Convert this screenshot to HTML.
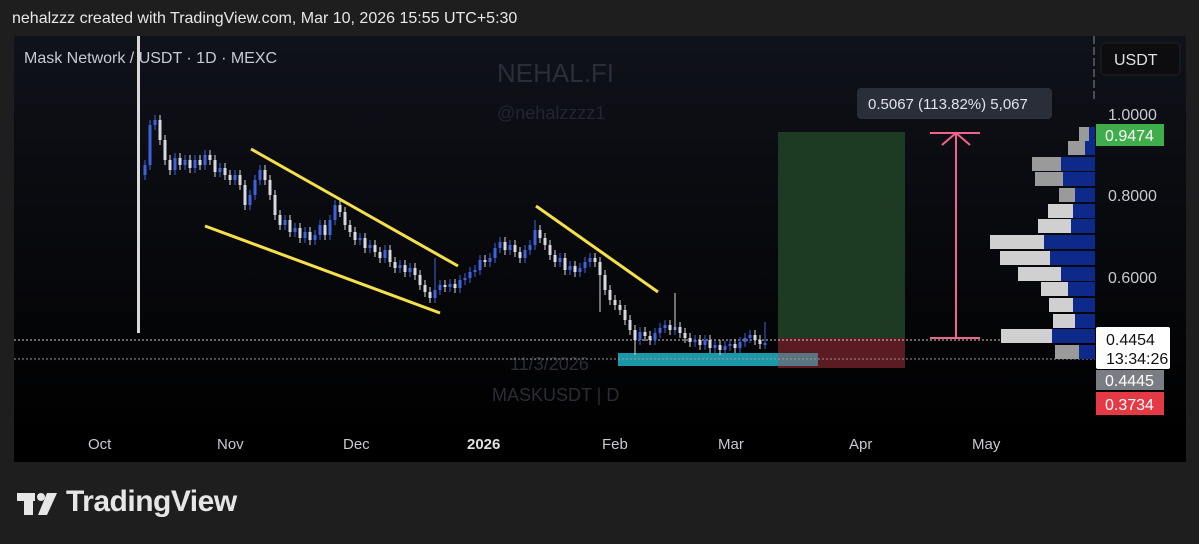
<!DOCTYPE html>
<html><head><meta charset="utf-8"><style>
body{margin:0;width:1199px;height:544px;background:#1e1e1e;overflow:hidden;font-family:"Liberation Sans",sans-serif;position:relative}
.hdr{position:absolute;left:12px;top:10px;color:#e8e8e8;font-size:16px}
.chart{position:absolute;left:14px;top:36px;width:1172px;height:426px;background:linear-gradient(#10121a,#000 95%)}
svg{position:absolute;left:0;top:0}
.logo{position:absolute;left:66px;top:485px;color:#e6e6e6;font-size:30px;font-weight:bold;letter-spacing:-0.5px}
</style></head><body>
<div class="hdr">nehalzzz created with TradingView.com, Mar 10, 2026 15:55 UTC+5:30</div>
<div class="chart"></div>
<svg width="1199" height="544" font-family="Liberation Sans, sans-serif">
<text x="497" y="82" font-size="26" fill="#2a2e3a">NEHAL.FI</text>
<text x="497" y="119" font-size="18" fill="#23262f">@nehalzzzz1</text>
<text x="510" y="370" font-size="18" fill="#2a2d36">11/3/2026</text>
<text x="492" y="401" font-size="18" fill="#2a2d36">MASKUSDT | D</text>
<text x="24" y="63" font-size="16" fill="#c8cad0">Mask Network / USDT · 1D · MEXC</text>
<rect x="137" y="36" width="3" height="297" fill="#d8d8d8"/>
<line x1="1094" y1="36" x2="1094" y2="100" stroke="#888" stroke-dasharray="8,3"/>
<rect x="778" y="132" width="127" height="206" fill="#1d3a22"/>
<rect x="778" y="338" width="127" height="30" fill="#5a1c22"/>
<rect x="618" y="353" width="200" height="13" fill="#1a98a8"/>
<rect x="778" y="353" width="40" height="13" fill="#6a6d78" opacity=".8"/>
<line x1="14" y1="340" x2="1095" y2="340" stroke="#ccc" stroke-dasharray="2,2"/>
<line x1="14" y1="359" x2="1095" y2="359" stroke="#999" stroke-dasharray="2,2"/>
<g fill="none">
<path stroke="#3d63dd" stroke-width="1" d="M145 160V180M150 120V170M155 115V130M175 153V175M185 155V170M195 155V173M205 150V170M220 163V177M235 170V185M250 190V210M255 175V200M260 165V185M285 215V230M295 223V237M305 227V243M315 230V245M320 220V240M330 215V240M335 200V225M360 233V245M370 240V253M385 245V263M400 260V273M410 263V277M435 258V303M440 280V295M450 279V292M460 275V293M465 273V285M470 267V283M475 265V277M480 255V275M490 253V267M495 243V263M500 237V253M510 240V255M525 245V263M530 240V255M535 220V250M560 253V267M570 261V275M580 263V277M585 257V273M590 253V267M640 327V345M655 328V345M660 323V338M665 320V333M675 322V335M695 335V347M705 335V350M715 340V353M725 341V355M730 339V351M740 337V353M745 333V347M750 330V343M765 322V349"/>
<path stroke="#3d63dd" stroke-width="3" d="M145 165V175M150 125V165M155 120V125M175 158V170M185 160V165M195 160V168M205 155V165M220 168V172M235 175V180M250 195V205M255 180V195M260 170V180M285 220V225M295 228V232M305 232V238M315 235V240M320 225V235M330 220V235M335 205V220M360 238V240M370 245V248M385 250V258M400 265V268M410 268V272M435 290V298M440 285V290M450 284V287M460 280V288M465 278V280M470 272V278M475 270V272M480 260V270M490 258V262M495 248V258M500 242V248M510 245V250M525 250V258M530 245V250M535 230V245M560 258V262M570 266V270M580 268V272M585 262V268M590 258V262M640 332V340M655 333V340M660 328V333M665 325V328M675 327V330M695 340V342M705 340V345M715 345V348M725 346V350M730 344V346M740 342V348M745 338V342M750 335V338M765 343V345"/>
<path stroke="#d8d9de" stroke-width="1" d="M160 115V145M165 135V165M170 155V175M180 153V170M190 155V173M200 155V170M210 150V165M215 155V177M225 163V180M230 170V185M240 170V190M245 180V210M265 165V185M270 175V200M275 190V220M280 210V230M290 215V237M300 223V243M310 227V245M325 220V240M340 200V217M345 207V230M350 220V237M355 227V245M365 233V253M375 240V257M380 247V263M390 245V267M395 257V273M405 260V277M415 263V280M420 270V290M425 280V297M430 287V303M445 280V292M455 279V293M485 255V267M505 237V255M515 240V257M520 247V263M540 225V243M545 233V250M550 240V260M555 250V267M565 253V275M575 261V277M595 253V267M600 257V312M605 270V295M610 285V305M615 295V310M620 300V315M625 305V325M630 315V335M635 325V355M645 327V341M650 331V345M670 320V335M675 293V330M680 322V338M685 328V343M690 333V347M700 335V350M710 335V353M720 340V355M735 339V353M755 330V345M760 335V349"/>
<path stroke="#d8d9de" stroke-width="3" d="M160 120V140M165 140V160M170 160V170M180 158V165M190 160V168M200 160V165M210 155V160M215 160V172M225 168V175M230 175V180M240 175V185M245 185V205M265 170V180M270 180V195M275 195V215M280 215V225M290 220V232M300 228V238M310 232V240M325 225V235M340 205V212M345 212V225M350 225V232M355 232V240M365 238V248M375 245V252M380 252V258M390 250V262M395 262V268M405 265V272M415 268V275M420 275V285M425 285V292M430 292V298M445 285V287M455 284V288M485 260V262M505 242V250M515 245V252M520 252V258M540 230V238M545 238V245M550 245V255M555 255V262M565 258V270M575 266V272M595 258V262M600 262V275M605 275V290M610 290V300M615 300V305M620 305V310M625 310V320M630 320V330M635 330V340M645 332V336M650 336V340M670 325V330M680 327V333M685 333V338M690 338V342M700 340V345M710 340V348M720 345V350M735 344V348M755 335V340M760 340V344"/>
</g>
<g stroke="#f5e04a" stroke-width="3"><line x1="251" y1="149" x2="458" y2="266"/><line x1="205" y1="226" x2="440" y2="313"/><line x1="536" y1="206" x2="658" y2="292"/></g>
<g stroke="#f0648c" stroke-width="2" fill="none"><line x1="956" y1="133" x2="956" y2="338"/><line x1="930" y1="133" x2="980" y2="133"/><line x1="930" y1="338" x2="980" y2="338"/><path d="M942 145 L956 133 L970 145"/></g>
<rect x="857" y="88" width="195" height="31" rx="4" fill="#2a2e39"/>
<text x="868" y="109" font-size="15" fill="#e0e3eb">0.5067 (113.82%) 5,067</text>
<g>
<rect x="1079" y="127" width="10" height="14" fill="#9a9a9a"/><rect x="1089" y="127" width="6" height="14" fill="#0d2a8a"/>
<rect x="1068" y="141" width="17" height="14" fill="#9a9a9a"/><rect x="1085" y="141" width="10" height="14" fill="#0d2a8a"/>
<rect x="1032" y="157" width="29" height="14" fill="#9a9a9a"/><rect x="1061" y="157" width="34" height="14" fill="#0d2a8a"/>
<rect x="1035" y="172" width="28" height="14" fill="#9a9a9a"/><rect x="1063" y="172" width="32" height="14" fill="#0d2a8a"/>
<rect x="1059" y="188" width="16" height="14" fill="#9a9a9a"/><rect x="1075" y="188" width="20" height="14" fill="#0d2a8a"/>
<rect x="1048" y="204" width="25" height="14" fill="#d0d0d0"/><rect x="1073" y="204" width="22" height="14" fill="#0d2a8a"/>
<rect x="1038" y="219" width="33" height="14" fill="#d0d0d0"/><rect x="1071" y="219" width="24" height="14" fill="#0d2a8a"/>
<rect x="990" y="235" width="54" height="14" fill="#d0d0d0"/><rect x="1044" y="235" width="51" height="14" fill="#0d2a8a"/>
<rect x="1000" y="251" width="50" height="14" fill="#d0d0d0"/><rect x="1050" y="251" width="45" height="14" fill="#0d2a8a"/>
<rect x="1018" y="267" width="43" height="14" fill="#d0d0d0"/><rect x="1061" y="267" width="34" height="14" fill="#0d2a8a"/>
<rect x="1041" y="282" width="27" height="14" fill="#d0d0d0"/><rect x="1068" y="282" width="27" height="14" fill="#0d2a8a"/>
<rect x="1049" y="298" width="24" height="14" fill="#d0d0d0"/><rect x="1073" y="298" width="22" height="14" fill="#0d2a8a"/>
<rect x="1053" y="314" width="22" height="14" fill="#d0d0d0"/><rect x="1075" y="314" width="20" height="14" fill="#0d2a8a"/>
<rect x="1001" y="329" width="51" height="14" fill="#d0d0d0"/><rect x="1052" y="329" width="43" height="14" fill="#0d2a8a"/>
<rect x="1055" y="345" width="24" height="14" fill="#9a9a9a"/><rect x="1079" y="345" width="16" height="14" fill="#0d2a8a"/>
</g>
<rect x="1101" y="43" width="79" height="32" rx="4" fill="#0d0d0f" stroke="#222"/>
<text x="1114" y="65" font-size="16" fill="#e0e0e0">USDT</text>
<g font-size="16" fill="#c8cad0"><text x="1108" y="120">1.0000</text><text x="1108" y="201">0.8000</text><text x="1108" y="283">0.6000</text></g>
<rect x="1096" y="124" width="68" height="22" fill="#3fae4a"/><text x="1105" y="141" font-size="16" fill="#fff">0.9474</text>
<rect x="1096" y="327" width="74" height="42" rx="2" fill="#fff"/><text x="1106" y="345" font-size="16" fill="#111">0.4454</text><text x="1106" y="364" font-size="16" fill="#111">13:34:26</text>
<rect x="1096" y="370" width="68" height="20" fill="#7a7d84"/><text x="1105" y="386" font-size="16" fill="#fff">0.4445</text>
<rect x="1096" y="392" width="68" height="23" fill="#e53945"/><text x="1105" y="410" font-size="16" fill="#fff">0.3734</text>
<g font-size="15" fill="#c8cad0"><text x="88" y="449">Oct</text><text x="217" y="449">Nov</text><text x="343" y="449">Dec</text><text x="467" y="449" font-weight="bold" fill="#e0e0e0">2026</text><text x="602" y="449">Feb</text><text x="718" y="449">Mar</text><text x="849" y="449">Apr</text><text x="972" y="449">May</text></g>
<g fill="#e6e6e6"><rect x="17" y="493" width="18" height="8"/><rect x="24" y="493" width="9" height="22"/><circle cx="41" cy="497" r="4"/><path d="M47 493 H57 L47 515 H38 Z"/></g>
</svg>
<div class="logo">TradingView</div>
</body></html>
